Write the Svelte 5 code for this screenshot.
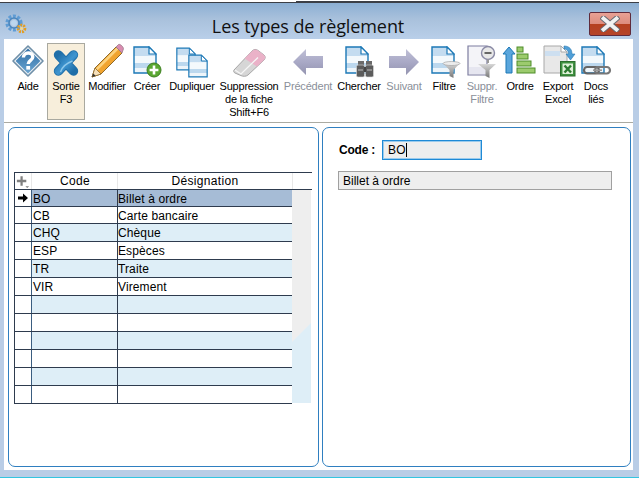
<script>
  const rows = [
    { code: 'BO', name: 'Billet à ordre' },
    { code: 'CB', name: 'Carte bancaire' },
    { code: 'CHQ', name: 'Chèque' },
    { code: 'ESP', name: 'Espèces' },
    { code: 'TR', name: 'Traite' },
    { code: 'VIR', name: 'Virement' },
    { code: '', name: '' }, { code: '', name: '' }, { code: '', name: '' },
    { code: '', name: '' }, { code: '', name: '' }, { code: '', name: '' }
  ];
</script>

<div class="window">
  <svg class="defs" width="0" height="0" aria-hidden="true">
    <defs>
      <linearGradient id="band" x1="0" y1="0" x2="0" y2="1">
        <stop offset="0" stop-color="#c4dcf0"/><stop offset="0.33" stop-color="#c4dcf0"/>
        <stop offset="0.34" stop-color="#f4f9fc"/><stop offset="0.62" stop-color="#f4f9fc"/>
        <stop offset="0.63" stop-color="#bcd8ee"/><stop offset="0.8" stop-color="#bcd8ee"/>
        <stop offset="0.81" stop-color="#eef5fa"/><stop offset="1" stop-color="#eef5fa"/>
      </linearGradient>
      <linearGradient id="arrow" x1="0" y1="0" x2="0" y2="1">
        <stop offset="0" stop-color="#c0c0d6"/><stop offset="0.5" stop-color="#a9a9c6"/><stop offset="1" stop-color="#9494b0"/>
      </linearGradient>
      <linearGradient id="steel" x1="0" y1="0" x2="0" y2="1">
        <stop offset="0" stop-color="#d8d8d8"/><stop offset="1" stop-color="#777"/>
      </linearGradient>
      <linearGradient id="xblue" x1="0" y1="0" x2="1" y2="1">
        <stop offset="0" stop-color="#1f6ea8"/><stop offset="0.55" stop-color="#3f95d0"/><stop offset="1" stop-color="#1f6ea8"/>
      </linearGradient>
      <linearGradient id="diamond" x1="0" y1="0" x2="0" y2="1">
        <stop offset="0" stop-color="#2f6ea5"/><stop offset="1" stop-color="#6aa4d0"/>
      </linearGradient>
      <symbol id="doc" viewBox="0 0 24 28">
        <path d="M1 1H16L23 8V27H1Z" fill="url(#band)" stroke="#1c78b6" stroke-width="1.4"/>
        <path d="M16 1V8H23Z" fill="#fff" stroke="#1c78b6" stroke-width="1.2"/>
      </symbol>
    </defs>
  </svg>

  <div class="topstrip"><div class="topline"></div></div>

  <header class="titlebar">
    <svg class="appicon" viewBox="0 0 22 22">
      <circle cx="9" cy="9" r="6.8" fill="none" stroke="#5f9cd4" stroke-width="3.6" stroke-dasharray="2.8 1.6"/>
      <circle cx="9" cy="9" r="5" fill="none" stroke="#4a86bd" stroke-width="1.6"/>
      <circle cx="9" cy="9" r="3" fill="#bcd6ee"/>
      <circle cx="16.5" cy="14.5" r="3.4" fill="none" stroke="#e59d1e" stroke-width="2.8" stroke-dasharray="1.8 1.1"/>
      <circle cx="16.5" cy="14.5" r="1.4" fill="#f7d98a"/>
    </svg>
    <h1>Les types de règlement</h1>
    <button class="close" aria-label="Fermer">
      <svg viewBox="0 0 20 16" width="20" height="16">
        <path d="M3.5 2.5L16.5 13.5M16.5 2.5L3.5 13.5" stroke="#666a72" stroke-width="5.8" stroke-linecap="square"/>
        <path d="M3.5 2.5L16.5 13.5M16.5 2.5L3.5 13.5" stroke="#f2f2f2" stroke-width="3.8" stroke-linecap="square"/>
      </svg>
    </button>
  </header>

  <main class="client">
    <nav class="toolbar">
      <div class="tool w-aide">
        <svg viewBox="0 0 36 36"><path d="M18 3L33 18L18 33L3 18Z" fill="#eef2f6" stroke="#6f8fa8" stroke-width="1.6" stroke-linejoin="round"/><path d="M18 5.6L30.4 18L18 30.4L5.6 18Z" fill="url(#diamond)" stroke-linejoin="round"/><path d="M13.4 14.6C13.4 8.6 22.8 8.6 22.8 14C22.8 17.4 18.2 17.4 18.2 21" fill="none" stroke="#fff" stroke-width="3.4"/><rect x="16.3" y="23" width="3.8" height="3.6" fill="#fff"/></svg>
        <span>Aide</span>
      </div>
      <div class="tool active w-sortie">
        <svg viewBox="0 0 36 36"><path d="M10.5 12L25.5 28M25.5 12L10.5 28" stroke="#1f6fa9" stroke-width="9.4" stroke-linecap="round"/><path d="M10.5 12L25.5 28M25.5 12L10.5 28" stroke="url(#xblue)" stroke-width="7.6" stroke-linecap="round"/><path d="M12.5 29C14 24 19 20 24.5 18" stroke="#8fc8ea" stroke-width="1.4" fill="none"/></svg>
        <span>Sortie<br>F3</span>
      </div>
      <div class="tool w-modifier">
        <svg viewBox="0 0 36 36"><path d="M3 34L6 25L27 4L33 10L12 31Z" fill="#f1a42f" stroke="#8f6a2a" stroke-width="1"/><path d="M6.8 25.4L27.6 4.6L29.4 6.4L8.6 27.2Z" fill="#fbd27e"/><path d="M3 34L6 25L12 31Z" fill="#f5dfb8" stroke="#8f6a2a" stroke-width=".8"/><path d="M3 34L4.2 30.4L6.6 32.8Z" fill="#333"/><path d="M27 4L29.5 1.5C31 0.6 34.8 4 34.4 6L33 10Z" fill="#d98cb0" stroke="#9a7a8a" stroke-width=".8"/></svg>
        <span>Modifier</span>
      </div>
      <div class="tool w-creer">
        <svg viewBox="0 0 36 36"><use href="#doc" x="4" y="3" width="24" height="28"/><circle cx="25" cy="27" r="7" fill="#5aa732" stroke="#3d7f20" stroke-width="1"/><path d="M25 22.6V31.4M20.6 27H29.4" stroke="#fff" stroke-width="2.6"/></svg>
        <span>Créer</span>
      </div>
      <div class="tool w-dupliquer">
        <svg viewBox="0 0 36 36"><use href="#doc" x="2" y="4" width="20" height="24"/><use href="#doc" x="14" y="11" width="20" height="24"/></svg>
        <span>Dupliquer</span>
      </div>
      <div class="tool w-suppression">
        <svg viewBox="0 0 36 36"><path d="M3 27L21 8C23 6 25 6 27 7.4L33 12C34.6 13.6 34.6 15 33 17L17 32C15 33.6 12 33.6 10 32.6L4 30C2.6 29.4 2.4 28 3 27Z" fill="#d6d6d6" stroke="#a6a6a6" stroke-width="1"/><path d="M13.6 15.6L21 8C23 6 25 6 27 7.4L33 12C34.6 13.6 34.6 15 33 17L26 23.6Z" fill="#eab2c8"/><path d="M4 27L10 31L27 14.5" fill="none" stroke="#f6f6f6" stroke-width="1.3"/></svg>
        <span>Suppression<br>de la fiche<br>Shift+F6</span>
      </div>
      <div class="tool dim w-precedent">
        <svg viewBox="0 0 36 36"><path d="M3 19L16 6V13H33V25H16V32Z" fill="url(#arrow)"/></svg>
        <span>Précédent</span>
      </div>
      <div class="tool w-chercher">
        <svg viewBox="0 0 36 36"><use href="#doc" x="4" y="3" width="24" height="28"/><rect x="17" y="18" width="6" height="5" fill="#6a6a6a"/><rect x="25" y="18" width="6" height="5" fill="#6a6a6a"/><rect x="15.5" y="22" width="8" height="12" rx="1.5" fill="#5c5c5c" stroke="#ddd" stroke-width=".6"/><rect x="24.5" y="22" width="8" height="12" rx="1.5" fill="#5c5c5c" stroke="#ddd" stroke-width=".6"/><rect x="23" y="24" width="2" height="5" fill="#444"/><path d="M17 27H22M26 27H31" stroke="#bbb"/></svg>
        <span>Chercher</span>
      </div>
      <div class="tool dim w-suivant">
        <svg viewBox="0 0 36 36"><path d="M33 19L20 6V13H3V25H20V32Z" fill="url(#arrow)"/></svg>
        <span>Suivant</span>
      </div>
      <div class="tool w-filtre">
        <svg viewBox="0 0 36 36"><use href="#doc" x="5" y="3" width="24" height="28"/><path d="M17 20H34L27.5 27V35L23.5 33V27Z" fill="url(#steel)"/><ellipse cx="25.5" cy="20.5" rx="8.5" ry="2" fill="#ececec" stroke="#999" stroke-width=".6"/></svg>
        <span>Filtre</span>
      </div>
      <div class="tool dim w-suppr">
        <svg viewBox="0 0 36 36"><path d="M4 3H23V32H4Z" fill="#f4f4f8" stroke="#7d7da0" stroke-width="1.2"/><path d="M5 24H22V31H5Z" fill="#e6e6f0"/><circle cx="24" cy="10" r="6.5" fill="#e8e8e8" stroke="#8a8aa5" stroke-width="1.4"/><path d="M20.5 10H27.5" stroke="#666" stroke-width="2"/><path d="M24 16.5V20" stroke="#999" stroke-width="2"/><path d="M14 21H32L25.5 27V35L21.5 33V27Z" fill="url(#steel)"/></svg>
        <span>Suppr.<br>Filtre</span>
      </div>
      <div class="tool w-ordre">
        <svg viewBox="0 0 36 36"><path d="M7 4L13 11H10V30H4V11H1Z" fill="#5aa6dc" stroke="#1c78b6" stroke-width="1"/><rect x="15" y="4" width="6" height="5" fill="#9ccb6d" stroke="#4f8d2b"/><rect x="15" y="11" width="11" height="5" fill="#9ccb6d" stroke="#4f8d2b"/><rect x="15" y="18" width="14" height="5" fill="#9ccb6d" stroke="#4f8d2b"/><rect x="15" y="25" width="18" height="5" fill="#9ccb6d" stroke="#4f8d2b"/></svg>
        <span>Ordre</span>
      </div>
      <div class="tool w-export">
        <svg viewBox="0 0 36 36"><path d="M4 3H21L27 9V30H4Z" fill="#e8e8e8" stroke="#a8a8a8"/><path d="M5 8H20V13H5Z" fill="#cddff0"/><path d="M21 3V9H27Z" fill="#fff" stroke="#a8a8a8"/><path d="M24 3C30 3 32 7 32 11H35L30.5 17L26 11H28.5C28.5 8 27 6 24 6Z" fill="#4f9fd8" stroke="#2a78b0" stroke-width=".6"/><rect x="20.5" y="18.5" width="14.5" height="14.5" fill="#3f9140" stroke="#2c6e2d"/><rect x="22.5" y="20.5" width="10.5" height="10.5" fill="#dff0d8"/><path d="M24.5 22.5L31 29.5M31 22.5L24.5 29.5" stroke="#2c7a30" stroke-width="2.4"/></svg>
        <span>Export<br>Excel</span>
      </div>
      <div class="tool w-docs">
        <svg viewBox="0 0 36 36"><use href="#doc" x="3" y="3" width="24" height="28"/><rect x="6" y="24" width="15" height="6.5" rx="3.2" fill="none" stroke="#666" stroke-width="2.2"/><rect x="17" y="24" width="15" height="6.5" rx="3.2" fill="none" stroke="#777" stroke-width="2.2"/><path d="M15 27.2H24" stroke="#999" stroke-width="1.6"/></svg>
        <span>Docs<br>liés</span>
      </div>
    </nav>

    <div class="panels">
      <section class="panel left">
        <div class="grid">
          <div class="head">
            <div class="c-ind plus">
              <svg viewBox="0 0 17 16" width="17" height="16"><path d="M7 3V13M2 8H12" stroke="#808080" stroke-width="2.4"/><path d="M11 13.5H15L13 15.5Z" fill="#808080"/></svg>
            </div>
            <div class="c-code">Code</div>
            <div class="c-name">Désignation</div>
            <div class="c-end"></div>
          </div>
          <div class="bodywrap">
            <div class="rows">
              {#each rows as row, i}
                <div class="row" class:sel={i === 0} class:alt={i > 0 && i % 2 === 0}>
                  <div class="c-ind">
                    {#if i === 0}
                      <svg viewBox="0 0 10 10" width="10" height="10"><path d="M0 3.5H5V0.5L10 5L5 9.5V6.5H0Z" fill="#000"/></svg>
                    {/if}
                  </div>
                  <div class="c-code">{row.code}</div>
                  <div class="c-name">{row.name}</div>
                </div>
              {/each}
            </div>
            <svg class="scroll" viewBox="0 0 19 213" preserveAspectRatio="none">
              <rect width="19" height="213" fill="#eeeeee"/>
              <path d="M0 152L19 133V213H0Z" fill="#deeef7"/>
            </svg>
          </div>
        </div>
      </section>
      <section class="panel right">
        <div class="coderow">
          <label for="code">Code :</label>
          <div class="codebox" id="code">BO<i class="caret"></i></div>
        </div>
        <div class="desig">Billet à ordre</div>
      </section>
    </div>
  </main>
  <div class="bottomline"></div>
</div>

<style>
  :global(body) { margin: 0; background: #b9cde6; }
  .defs { position: absolute; }
  .window {
    width: 639px; height: 478px; overflow: hidden;
    display: flex; flex-direction: column;
    background: #b9cde6;
    font-family: "Liberation Sans", Arial, sans-serif;
    color: #000;
  }
  .topstrip { height: 3px; box-sizing: border-box; background: #fff; border-bottom: 1px solid #3c3f46; padding-left: 296px; flex: none; }
  .topline { height: 2px; width: 304px; box-sizing: border-box; border-bottom: 1px solid #3c3f46; background: #fff; }
  .titlebar {
    height: 36px; flex: none; display: flex; align-items: center; position: relative;
    background: linear-gradient(#8cafd3, #a9c1dc 45%, #b9cfe9);
  }
  .appicon { width: 22px; height: 22px; margin: 8px 0 0 5px; flex: none; }
  h1 {
    margin: 0; font: 400 18px "Open Sans", sans-serif; letter-spacing: -0.1px; color: #111;
    position: absolute; left: 0; width: 616px; text-align: center; top: 11px;
  }
  .close {
    position: absolute; left: 589px; top: 9px; width: 42px; height: 24px; padding: 0;
    border: 1px solid #5f2b3c; border-radius: 2px;
    background: linear-gradient(#e8a195, #dd8d7e 48%, #b5401f 52%, #b5452a);
    display: flex; align-items: center; justify-content: center;
  }
  .client {
    flex: none; height: 431px; margin: 0 6px 0 4px; background: #fff;
    display: flex; flex-direction: column;
  }
  .toolbar {
    height: 84px; flex: none; display: flex; padding: 4px 0 0 5px;
    border-bottom: 1px solid #aaaaa2; box-sizing: border-box;
  }
  .tool {
    display: flex; flex-direction: column; align-items: center; box-sizing: border-box;
    height: 77px; font-size: 11px; line-height: 13px; letter-spacing: -0.2px; text-align: center; flex: none;
    white-space: nowrap; color: #000;
  }
  .tool svg { width: 36px; height: 36px; flex: none; margin-bottom: 1px; }
  .tool.active { background: #f7eedb; outline: 1px solid #a9a9a0; outline-offset: -1px; }
  .tool.dim { color: #8a8f99; }
  .w-aide, .w-sortie { width: 38px; }
  .w-modifier, .w-chercher { width: 44px; }
  .w-creer { width: 36px; }
  .w-dupliquer { width: 54px; }
  .w-suppression { width: 60px; }
  .w-precedent { width: 58px; }
  .w-suivant { width: 46px; }
  .w-filtre, .w-ordre, .w-docs { width: 34px; }
  .w-suppr, .w-export { width: 42px; }

  .panels { flex: none; display: flex; gap: 3px; padding: 4px 2px 0 4px; }
  .panel {
    height: 340px; box-sizing: border-box; border: 1px solid #2f7fc0; border-radius: 7px; background: #fff;
  }
  .left { width: 311px; flex: none; padding: 44px 0 0 5px; }
  .right { flex: 1; padding: 12px 0 0 15px; }

  .grid { width: 298px; font-size: 12px; }
  .head {
    display: flex; height: 16px; box-sizing: content-box; border-top: 1px solid #2e3b4e; border-bottom: 1px solid #2e3b4e;
  }
  .head div { border-left: 1px solid #e8e8e8; text-align: center; line-height: 17px; letter-spacing: 0.35px; }
  .head .c-ind { border-left: 1px solid #2e3b4e; }
  .c-ind { width: 16px; flex: none; display: flex; align-items: center; justify-content: center; }
  .plus { justify-content: flex-start; }
  .c-code { width: 85px; flex: none; border-left: 1px solid #3a5d80; padding-left: 1px; box-sizing: border-box; }
  .c-name { width: 175px; flex: none; border-left: 1px solid #2e3b4e; box-sizing: border-box; padding-left: 0; }
  .c-end { flex: 1; }
  .head .c-code { width: 86px; }
  .head .c-name { width: 175px; }
  .bodywrap { display: flex; height: 214px; align-items: flex-start; }
  .rows { width: 278px; flex: none; border-left: 1px solid #2e3b4e; box-sizing: border-box; }
  .row { display: flex; height: 18px; box-sizing: border-box; border-bottom: 1px solid #2e3b4e; line-height: 19px; letter-spacing: 0.12px; }
  .row:nth-child(-n+2) { height: 17px; line-height: 18px; }
  .row.sel { background: #a6bcd6; }
  .row.sel .c-ind { background: #fff; }
  .row.alt { background: #deeef7; }
  .row.alt .c-ind { background: #fff; }
  .row .c-code { width: 86px; }
  .row .c-ind { width: 16px; }
  .scroll { width: 19px; height: 213px; flex: none; display: block; }

  .coderow { display: flex; align-items: center; height: 20px; }
  label { font: 700 12px/20px "Liberation Sans", sans-serif; letter-spacing: -0.2px; width: 44px; padding-left: 1px; box-sizing: border-box; flex: none; }
  .codebox {
    width: 100px; height: 20px; box-sizing: border-box; border: 1px solid #1f8ad6;
    background: #eeeeee; font-size: 12px; line-height: 18px; padding-left: 5px;
    letter-spacing: 0.2px; box-shadow: inset 0 0 0 1px #9ccbec;
  }
  .caret { display: inline-block; width: 1px; height: 14px; background: #000; vertical-align: -3px; }
  .desig {
    margin-top: 11px; width: 274px; height: 19px; box-sizing: border-box; border: 1px solid #a0a0a0;
    background: #eeeeee; font-size: 12px; line-height: 19px; padding-left: 4px;
  }
  .bottomline { height: 1px; background: #33c5e0; margin-top: 7px; flex: none; }
</style>
